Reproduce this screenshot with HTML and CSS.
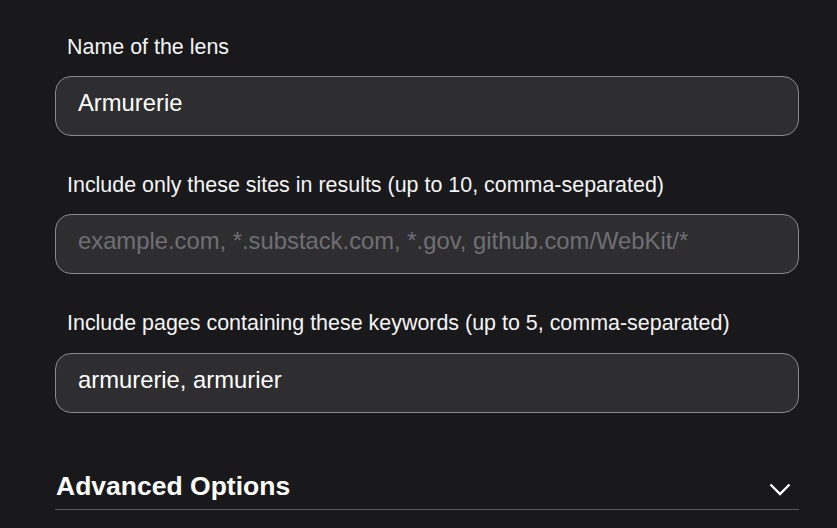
FILE: index.html
```html
<!DOCTYPE html>
<html>
<head>
<meta charset="utf-8">
<link rel="stylesheet" href="styles.css">
</head>
<body>
<div class="form">
  <div class="field">
    <label class="label">Name of the lens</label>
    <div class="input">Armurerie</div>
  </div>
  <div class="field">
    <label class="label">Include only these sites in results (up to 10, comma-separated)</label>
    <div class="input placeholder">example.com, *.substack.com, *.gov, github.com/WebKit/*</div>
  </div>
  <div class="field last">
    <label class="label">Include pages containing these keywords (up to 5, comma-separated)</label>
    <div class="input">armurerie, armurier</div>
  </div>
  <div class="advanced">
    <span class="adv-title">Advanced Options</span>
    <svg class="chevron" width="22" height="13" viewBox="0 0 22 13"><path d="M1.5 1.5 L11 11 L20.5 1.5" fill="none" stroke="#ffffff" stroke-width="2.4"/></svg>
  </div>
</div>
</body>
</html>
```

FILE: styles.css
```css
html, body {
  margin: 0;
  padding: 0;
  background: #19191b;
  font-family: "Liberation Sans", Arial, sans-serif;
  color: #ffffff;
}
.form {
  width: 744px;
  margin-left: 55px;
  padding-top: 35px;
  display: flex;
  flex-direction: column;
}
.field {
  display: flex;
  flex-direction: column;
  margin-bottom: 37px;
}
.label {
  font-size: 21.45px;
  line-height: 24px;
  padding-left: 12px;
  margin-bottom: 17px;
  color: #f4f4f6;
}
.field.last .label {
  margin-bottom: 18px;
}
.input {
  box-sizing: border-box;
  height: 60px;
  border: 1px solid #8a8a8e;
  border-radius: 16px;
  background: #2e2e30;
  padding: 0 22px 6px;
  display: flex;
  align-items: center;
  font-size: 23.8px;
  color: #ffffff;
}
.input.placeholder {
  color: #6f6f74;
}
.advanced {
  margin-top: 0;
  padding: 21px 0 8px;
  border-bottom: 1px solid #5a5a5e;
  display: flex;
  align-items: center;
  justify-content: space-between;
}
.adv-title {
  font-size: 26.5px;
  line-height: 30px;
  font-weight: bold;
  padding-left: 1px;
}
.chevron {
  margin-top: 7px;
  margin-right: 8px;
}
```
